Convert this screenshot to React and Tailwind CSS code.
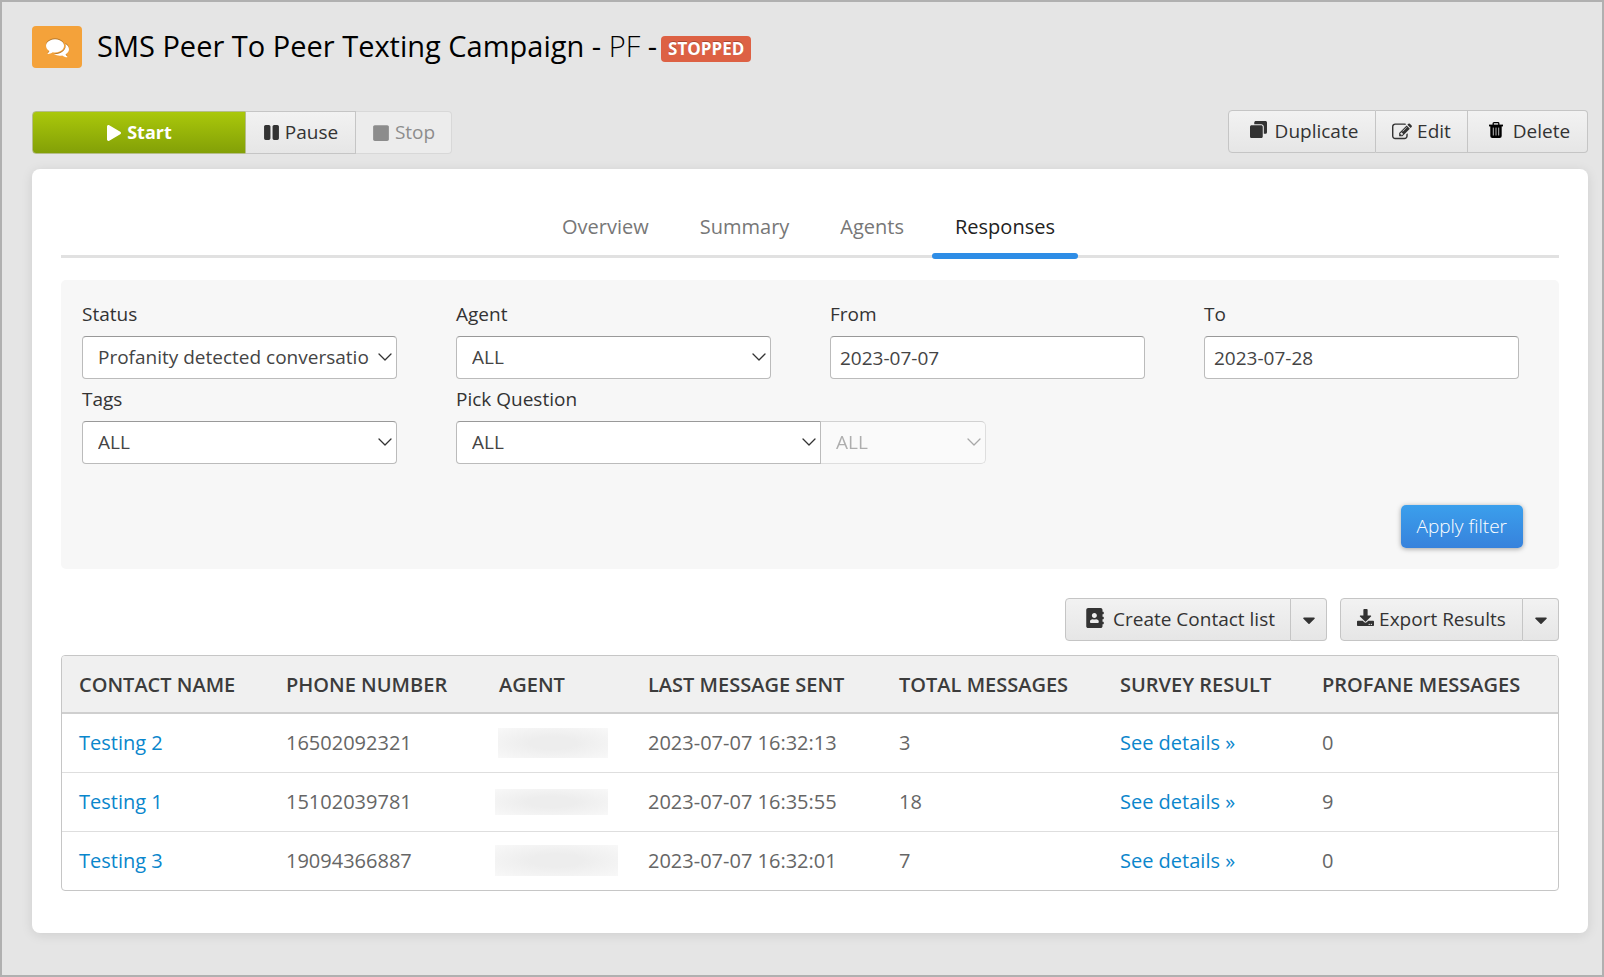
import React from 'react';
import { useState } from 'react';
import { FaPlay, FaPause, FaStop, FaCaretDown, FaClone, FaAddressBook, FaDownload } from 'react-icons/fa';
import { FiChevronDown } from 'react-icons/fi';

const TABS = ['Overview', 'Summary', 'Agents', 'Responses'];

const RESPONSES = [
    { id: 2, name: 'Testing 2', phone: '16502092321', sent: '2023-07-07 16:32:13', total: 3, profane: 0, mask: '-ml-px h-[30px] w-[110px]' },
    { id: 1, name: 'Testing 1', phone: '15102039781', sent: '2023-07-07 16:35:55', total: 18, profane: 9, mask: '-ml-1 h-[26px] w-[113px]' },
    { id: 3, name: 'Testing 3', phone: '19094366887', sent: '2023-07-07 16:32:01', total: 7, profane: 0, mask: '-ml-1 h-[31px] w-[123px]' },
];

const CommentsIcon = ({ className }) => (
    <svg className={className} viewBox="0 0 1792 1792" fill="currentColor">
        <path d="M1408 768q0 139-94 257t-256.500 186.500-353.500 68.500q-86 0-176-16-124 88-278 128-36 9-86 16h-3q-11 0-20.500-8t-11.500-21q-1-3-1-6.500t.5-6.500 2-6l2.500-5 3.500-5.500 4-5 4.500-5 4-4.500q5-6 23-25t26-29.500 22.500-29 25-38.500 20.500-44q-124-72-195-177t-71-224q0-139 94-257t256.500-186.500 353.500-68.500 353.500 68.500 256.500 186.500 94 257zm384 256q0 120-71 224.500t-195 176.500q10 24 20.500 44t25 38.500 22.500 29 26 29.500 23 25q1 1 4 4.500t4.500 5 4 5 3.500 5.500l2.500 5 2 6 .5 6.500-1 6.500q-3 14-13 22t-22 7q-50-7-86-16-154-40-278-128-90 16-176 16-271 0-472-132 58 4 88 4 161 0 309-45t264-129q125-92 192-212t67-254q0-77-23-152 129 71 204 178t75 230z" />
    </svg>
);

const EditIcon = ({ className }) => (
    <svg className={className} viewBox="0 0 1792 1792" fill="currentColor">
        <path d="M888 1184l116-116-152-152-116 116v56h96v96h56zm440-720q-16-16-33 1l-350 350q-17 17-1 33t33-1l350-350q17-17 1-33zm80 594v190q0 119-84.500 203.500t-203.500 84.500h-832q-119 0-203.500-84.500t-84.500-203.500v-832q0-119 84.500-203.500t203.500-84.500h832q63 0 117 25 15 7 18 23 3 17-9 29l-49 49q-14 14-32 8-23-6-45-6h-832q-66 0-113 47t-47 113v832q0 66 47 113t113 47h832q66 0 113-47t47-113v-126q0-13 9-22l64-64q15-15 35-7t20 29zm-96-738l288 288-672 672h-288v-288zm444 132l-92 92-288-288 92-92q28-28 68-28t68 28l152 152q28 28 28 68t-28 68z" />
    </svg>
);

const TrashIcon = ({ className }) => (
    <svg className={className} viewBox="0 0 14 16" fill="none" stroke="currentColor">
        <path d="M0 3.500h14" strokeWidth="1.800" />
        <path d="M4.200 3V1.500q0-.8.8-.8h4q.8 0 .8.8V3" strokeWidth="1.300" />
        <path d="M1.300 4h11.400v10q0 2-2 2H3.300q-2 0-2-2z" fill="currentColor" stroke="none" />
        <path d="M4.300 5.600v7.900M7 5.600v7.900M9.700 5.600v7.900" stroke="#bbb" strokeWidth="1" />
    </svg>
);

const GroupButton = ({ className = '', children, ...rest }) => (
    <button
        type="button"
        className={`flex h-[43px] items-center justify-center border border-[#c5c5c5] bg-linear-to-b from-[#f2f2f2] to-[#e6e6e6] ${className}`}
        {...rest}
    >
        {children}
    </button>
);

const SelectField = ({ id, label, options, disabled, box = 'rounded-[4px]', className = '' }) => (
    <div className={className}>
        {label && <label htmlFor={id} className="mb-[10px] block leading-6">{label}</label>}
        <div className={`relative ${disabled ? 'opacity-40' : ''}`}>
            <select
                id={id}
                aria-label={label ? undefined : 'Answer'}
                disabled={disabled}
                className={`block h-[43px] w-full appearance-none border border-[#bbb] border-t-[#999] bg-white pr-[26px] pl-[15px] text-[#444] ${box}`}
            >
                {options.map((o) => <option key={o}>{o}</option>)}
            </select>
            <FiChevronDown className="pointer-events-none absolute top-[9px] right-0 size-6 stroke-[1.3]" />
        </div>
    </div>
);

const DateField = ({ id, label, value }) => (
    <div>
        <label htmlFor={id} className="mb-[10px] block leading-6">{label}</label>
        <input
            id={id}
            type="text"
            defaultValue={value}
            className="block h-[43px] w-full rounded-[4px] border border-[#bbb] border-t-[#999] bg-white px-[9px] text-[#444]"
        />
    </div>
);

const App = () => {
    const [tab, setTab] = useState('Responses');

    return (
        <div className="min-h-screen border-2 border-[#b0b0b0] bg-[#e5e5e5] pt-6 pr-[14px] pb-8 pl-[30px] font-['Open_Sans',sans-serif] text-[19px] text-[#333]">
            <header className="flex items-center">
                <div className="flex h-[42px] w-[50px] items-center justify-center rounded-[4px] bg-[#f4a23a] text-white">
                    <CommentsIcon className="size-[23px] drop-shadow-[0_-1px_0_rgba(0,0,0,0.25)]" />
                </div>
                <h1 className="ml-[15px] flex items-center gap-1 pb-[2px] text-[29px] leading-10 text-black">
                    <span>SMS Peer To Peer Texting Campaign - <span className="font-light">PF</span> -</span>
                    <span className="mt-[6px] rounded-[4px] bg-[#dd6144] px-[7px] text-[17px] leading-[26px] font-bold text-white [text-shadow:0_-1px_0_rgba(0,0,0,0.25)]">STOPPED</span>
                </h1>
            </header>

            <div className="mt-[42px] flex items-start justify-between">
                <div className="flex pt-px">
                    <button type="button" className="flex h-[43px] w-[214px] items-center justify-center gap-[5px] rounded-l-[4px] border border-[#b5bd8a] bg-linear-to-b from-[#aac80b] to-[#83a007] text-[18px] font-bold text-white">
                        <FaPlay className="size-4" /> Start
                    </button>
                    <GroupButton className="w-[110px] gap-[5px] border-l-0">
                        <FaPause className="size-[17px]" /> Pause
                    </GroupButton>
                    <button type="button" disabled className="flex h-[43px] w-24 items-center justify-center gap-[5px] rounded-r-[4px] border border-l-0 border-[#d8d8d8] bg-[#ececec] text-[#8c8c8c]">
                        <FaStop className="size-[18px]" /> Stop
                    </button>
                </div>
                <div className="flex">
                    <GroupButton className="w-[148px] gap-2 rounded-l-[4px] pl-1">
                        <FaClone className="mb-1 size-[17px] rotate-180" /> Duplicate
                    </GroupButton>
                    <GroupButton className="w-[92px] gap-[5px] border-l-0">
                        <EditIcon className="size-[20px]" /> Edit
                    </GroupButton>
                    <GroupButton className="w-[120px] gap-[10px] rounded-r-[4px] border-l-0 pl-1">
                        <TrashIcon className="mb-1 h-4 w-[14px] text-black" /> Delete
                    </GroupButton>
                </div>
            </div>

            <main className="mt-[15px] rounded-lg bg-white px-[29px] pt-[31px] pb-[42px] shadow-[0_2px_12px_rgba(0,0,0,0.1)]">
                <nav className="flex justify-center gap-[5px] border-b-3 border-[#e1e1e1] pr-[3px] text-[20px]">
                    {TABS.map((t) => (
                        <button
                            key={t}
                            type="button"
                            onClick={() => setTab(t)}
                            className={`relative px-[23px] pt-[13px] pb-[14px] leading-7 ${tab === t ? 'text-[#222]' : 'text-[#777]'}`}
                        >
                            {t}
                            {tab === t && <span className="absolute inset-x-0 -bottom-1 h-[6px] rounded-sm bg-[#2e8de6]" />}
                        </button>
                    ))}
                </nav>

                <form className="mt-[22px] rounded-[5px] bg-[#f7f7f7] px-[21px] pt-[22px] pb-[21px]" onSubmit={(e) => e.preventDefault()}>
                    <div className="mr-[19px] grid grid-cols-4 gap-x-[59px] gap-y-2">
                        <SelectField id="status" label="Status" options={['Profanity detected conversations']} />
                        <SelectField id="agent" label="Agent" options={['ALL']} />
                        <DateField id="from" label="From" value="2023-07-07" />
                        <DateField id="to" label="To" value="2023-07-28" />
                        <SelectField id="tags" label="Tags" options={['ALL']} />
                        <div className="col-span-2 flex items-end">
                            <SelectField id="question" label="Pick Question" options={['ALL']} box="rounded-l-[4px]" className="w-[365px]" />
                            <SelectField id="answer" options={['ALL']} disabled box="rounded-r-[5px] border-l-0" className="w-[165px]" />
                        </div>
                    </div>
                    <div className="mt-[41px] mr-[15px] flex justify-end">
                        <button type="submit" className="h-[43px] rounded-[5px] bg-linear-to-b from-[#3b9fec] to-[#3782dc] px-4 font-light text-white shadow-[0_1px_5px_rgba(0,0,0,0.35)]">
                            Apply filter
                        </button>
                    </div>
                </form>

                <div className="mt-[29px] flex justify-end gap-[13px]">
                    <div className="flex">
                        <GroupButton className="w-[226px] gap-2 rounded-l-[4px] pl-1">
                            <FaAddressBook className="mb-1 size-5" /> Create Contact list
                        </GroupButton>
                        <GroupButton className="w-[36px] rounded-r-[4px] border-l-0" aria-label="More contact list actions">
                            <FaCaretDown className="size-5" />
                        </GroupButton>
                    </div>
                    <div className="flex">
                        <GroupButton className="w-[183px] gap-[5px] rounded-l-[4px]">
                            <FaDownload className="mb-1 size-[17px]" /> Export Results
                        </GroupButton>
                        <GroupButton className="w-[36px] rounded-r-[4px] border-l-0" aria-label="More export actions">
                            <FaCaretDown className="size-5" />
                        </GroupButton>
                    </div>
                </div>

                <div className="mt-[14px] overflow-hidden rounded-[4px] border border-[#c6c6c6]">
                    <table className="w-full table-fixed text-left text-[20px] leading-7">
                        <colgroup>
                            <col className="w-[207px]" />
                            <col className="w-[213px]" />
                            <col className="w-[149px]" />
                            <col className="w-[251px]" />
                            <col className="w-[221px]" />
                            <col className="w-[202px]" />
                            <col />
                        </colgroup>
                        <thead className="bg-[#f0f0f0] text-[#3c3c3c]">
                            <tr className="h-[57px] border-b-2 border-[#cfcfcf] *:pt-[2px] *:pl-[17px] *:font-semibold">
                                <th>CONTACT NAME</th>
                                <th>PHONE NUMBER</th>
                                <th>AGENT</th>
                                <th>LAST MESSAGE SENT</th>
                                <th>TOTAL MESSAGES</th>
                                <th>SURVEY RESULT</th>
                                <th>PROFANE MESSAGES</th>
                            </tr>
                        </thead>
                        <tbody className="text-[#666]">
                            {RESPONSES.map((r) => (
                                <tr key={r.id} className="h-[59px] border-b border-[#dedede] *:pl-[17px] last:border-b-0">
                                    <td><a href={`#contact-${r.id}`} className="text-[#0a86cc]">{r.name}</a></td>
                                    <td>{r.phone}</td>
                                    <td><div className={`bg-[radial-gradient(ellipse,#ededed_30%,#f8f8f8_100%)] ${r.mask}`} /></td>
                                    <td>{r.sent}</td>
                                    <td>{r.total}</td>
                                    <td><a href={`#survey-${r.id}`} className="text-[#0a86cc]">See details »</a></td>
                                    <td>{r.profane}</td>
                                </tr>
                            ))}
                        </tbody>
                    </table>
                </div>
            </main>
        </div>
    );
};

export default App;
